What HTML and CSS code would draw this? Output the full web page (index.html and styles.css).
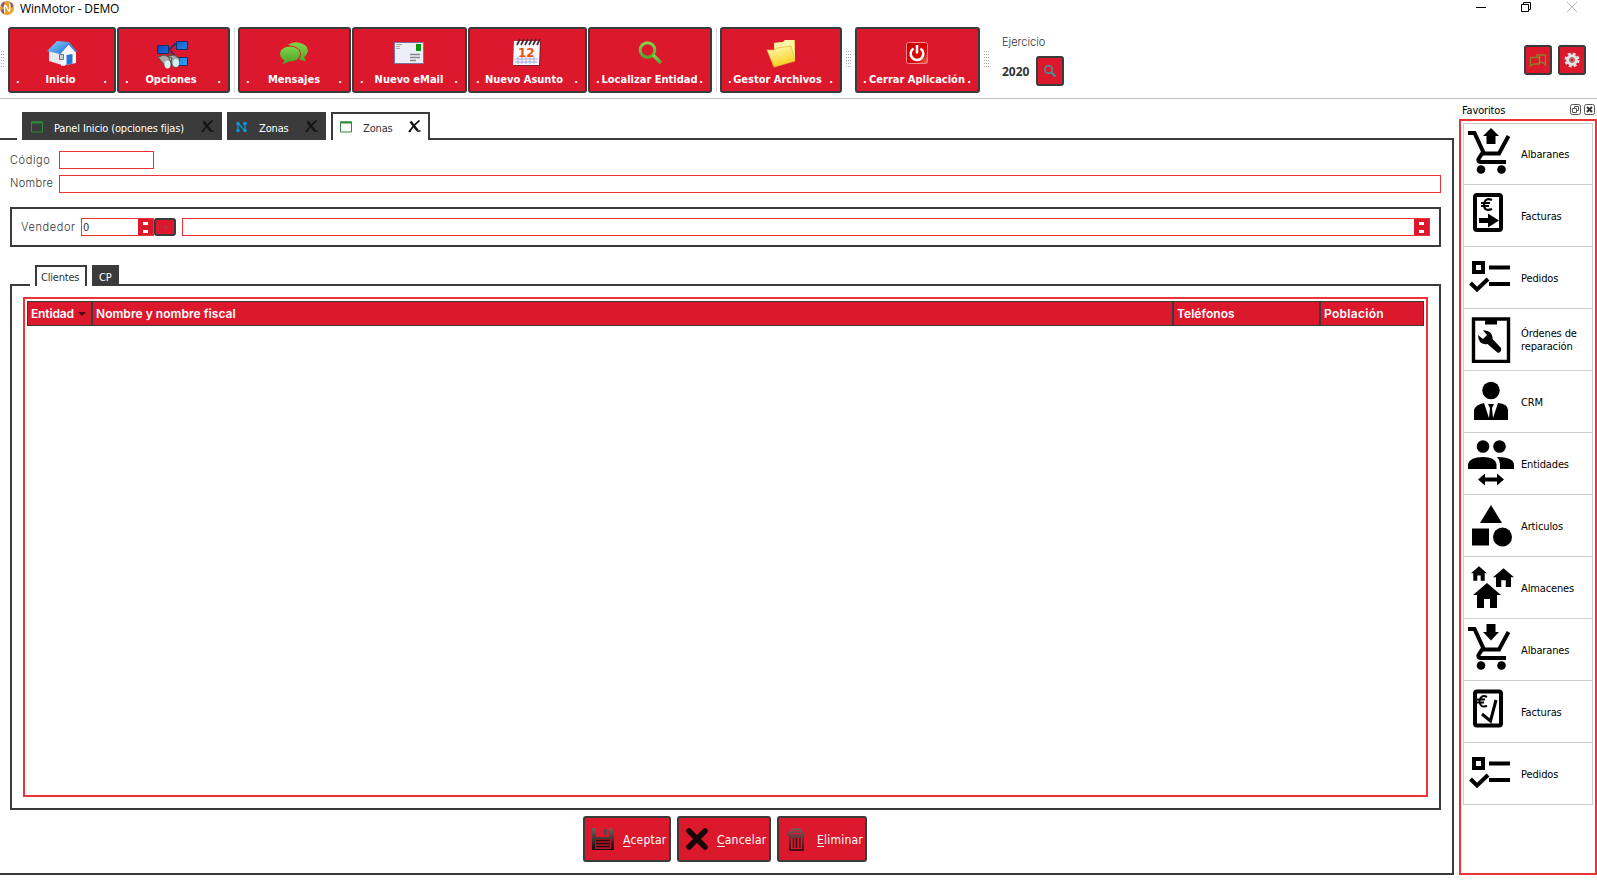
FILE: index.html
```html
<!DOCTYPE html>
<html lang="es">
<head>
<meta charset="utf-8">
<title>WinMotor - DEMO</title>
<link rel="stylesheet" href="styles.css">
</head>
<body>
<svg class="defs" width="0" height="0">
  <defs>
    <linearGradient id="green" x1="0" y1="0" x2="0" y2="1"><stop offset="0" stop-color="#83d44a"/><stop offset="1" stop-color="#50a829"/></linearGradient>
    <linearGradient id="blue" x1="0" y1="0" x2="1" y2="1"><stop offset="0" stop-color="#0a3fb5"/><stop offset="1" stop-color="#2ba4ff"/></linearGradient>
    <linearGradient id="roof" x1="0" y1="0" x2="1" y2="1"><stop offset="0" stop-color="#8fd0ff"/><stop offset="1" stop-color="#1d74d8"/></linearGradient>
    <linearGradient id="folder" x1="0" y1="0" x2="0.4" y2="1"><stop offset="0" stop-color="#fffbc4"/><stop offset="1" stop-color="#fbd21c"/></linearGradient>
    <linearGradient id="dark" x1="0" y1="0" x2="0" y2="1"><stop offset="0" stop-color="#656565"/><stop offset="1" stop-color="#150809"/></linearGradient>
    <linearGradient id="power" x1="0" y1="0" x2="1" y2="1"><stop offset="0" stop-color="#c80000"/><stop offset=".7" stop-color="#dd0808"/><stop offset="1" stop-color="#e8805a"/></linearGradient>
    <symbol id="window" viewBox="0 0 12 12"><path d="M.5 1h11v10H.5z" fill="none" stroke="#2f8b35"/><path d="M0 .5h12v2H0z" fill="#2f8b35"/></symbol>
    <symbol id="cross" viewBox="0 0 13 13"><path d="M2.500 1.500l7 9" stroke="currentColor" stroke-width="2.600"/><path d="M11.500 .5C8 3 4 7 1 12" stroke="currentColor" stroke-width="1.700" fill="none"/><path d="M9 11h3.500M1 11h2" stroke="currentColor" stroke-width="1.500"/></symbol>
    <symbol id="cart" viewBox="0 0 46 46"><path d="M0 5h6.500L16 25.500h15L40.500 8" fill="none" stroke="#000" stroke-width="4"/><path d="M15 24l-4.500 7q-1 3 2 3H38" fill="none" stroke="#000" stroke-width="4"/><circle cx="13" cy="41.500" r="4.300"/><circle cx="33.500" cy="41.500" r="4.300"/></symbol>
    <symbol id="orders" viewBox="0 0 46 46"><path d="M6 10h9v9H6zM21 14.500h21M21 31h21" fill="none" stroke="#000" stroke-width="4"/><path d="M2.500 30l6.500 6.500L20 26" fill="none" stroke="#000" stroke-width="4"/></symbol>
    <symbol id="house" viewBox="0 0 28 25"><path d="M14 0l14 12h-4v13h-7v-9h-6v9H4V12H0z"/></symbol>
  </defs>
</svg>

<header class="titlebar">
  <svg class="app-icon" width="14" height="14" viewBox="0 0 14 14"><circle cx="7" cy="7" r="7" fill="#eca029"/><path d="M1 3.500Q2.500 1 4.500.5L4 5 2 6.500zM1 9l3-1.500V13Q1.500 12 1 9M10 .7q3 1.300 3.500 4.300L11 7z" fill="#7b5690"/><path d="M4.500 11.500V5q.5-1.300 1.300-.3l2.700 5q.8 1 1.300-.4V2.500" fill="none" stroke="#fff" stroke-width="1.300"/></svg>
  <span class="app-title">WinMotor - DEMO</span>
  <svg class="window-buttons" width="102" height="14" viewBox="0 0 102 14" fill="none" stroke="#000"><path d="M0 6.500h10M45.500 3.500h7v7h-7zM47.500 3V1.500h7v7H53"/><path d="M91 1l10 10M101 1L91 11" stroke="#bbb"/></svg>
</header>

<nav class="toolbar">
  <i class="grip grip-first"></i>
  <button class="tool w-inicio"><svg width="32" height="32" viewBox="0 0 32 32"><path d="M3 14l8-5 4 4 4 2v14L3 24z" fill="#e9e9ee"/><path d="M15 16l8-9 7 8v11l-15 3z" fill="#f8f8fa"/><path d="M1 14L11 4l12 1-9 12z" fill="url(#roof)"/><path d="M23 5l8 9.500-1.500 1L22.500 7.500 14.500 17l-1-1.500z" fill="#3e8de6"/><path d="M20.500 18l6-1v9.500l-6 1.500z" fill="#2777d5"/><path d="M13.500 17.500h4v5h-4z" fill="#ccc" stroke="#777"/></svg><span class="label"><i>.</i><b>Inicio</b><i>.</i></span></button>
  <button class="tool w-opciones"><svg width="32" height="32" viewBox="0 0 32 32"><path d="M12 13l6-6h3M14 14l5 7h4" stroke="#38256d" stroke-width="2" fill="none"/><path d="M.5 8.500h11v8H.5zM19.500 4.500h11v8h-11zM19.500 20.500h11v8h-11z" fill="url(#blue)" stroke="#163067"/><path d="M1 20l6-2 8 3-2 8-4 1zM11 19l6-1 6 4-3 8h-4z" fill="#a8aaa4" stroke="#53544f"/><ellipse cx="10.500" cy="27.500" rx="3" ry="4" fill="#d4f2f8"/><ellipse cx="19" cy="26" rx="3" ry="4" fill="#d4f2f8"/></svg><span class="label"><i>.</i><b>Opciones</b><i>.</i></span></button>
  <i class="rule"></i>
  <button class="tool w-mensajes"><svg width="32" height="32" viewBox="0 0 32 32"><path d="M10 8q5-4 12-2 8 2 8 8-1 4-4 6l2 4q-4 0-7-2 5-9-11-14z" fill="url(#green)"/><ellipse cx="12" cy="17" rx="10.500" ry="8" fill="url(#green)" stroke="#dc182c"/><path d="M6 22q1 3-2 5 4 0 7-3z" fill="#55ad2d"/></svg><span class="label"><i>.</i><b>Mensajes</b><i>.</i></span></button>
  <button class="tool w-email"><svg width="32" height="32" viewBox="0 0 32 32"><path d="M1.500 5.500h29v21h-29z" fill="#eeeef8" stroke="#7774a0"/><path d="M3 7.500h6M3 9.500h4M3 11.500h4" stroke="#aaa"/><path d="M23 7h5v7h-5z" fill="#06980b"/><path d="M17 17.500h10M17 20.500h10M17 23.500h6" stroke="#888" stroke-width="1.500"/></svg><span class="label"><i>.</i><b>Nuevo eMail</b><i>.</i></span></button>
  <button class="tool w-asunto"><svg width="32" height="32" viewBox="0 0 32 32"><path d="M4 5h26l-1 24H3z" fill="#77222c"/><path d="M3 4h26l-1 24H2z" fill="#fbfbff"/><path d="M4 22h23M4 25h23M7 20v7M11 20v7M15 20v7M19 20v7M23 20v7" stroke="#aaa9dc"/><path d="M6 8l3-6M10 8l3-6M14 8l3-6M18 8l3-6M22 8l3-6M26 8l3-6" stroke="#422d31" stroke-width="1.700"/><text x="7" y="19.500" class="calendar-number">12</text></svg><span class="label"><i>.</i><b>Nuevo Asunto</b><i>.</i></span></button>
  <button class="tool w-localizar"><svg width="32" height="32" viewBox="0 0 32 32" fill="none" stroke="url(#green)"><circle cx="13.500" cy="13" r="7.300" stroke-width="3"/><path d="M19 18l8 8" stroke-width="3.500"/></svg><span class="label"><i>.</i><b>Localizar Entidad</b><i>.</i></span></button>
  <i class="rule"></i>
  <button class="tool w-gestor"><svg width="32" height="32" viewBox="0 0 32 32"><path d="M9 6l9-1 2-2h10v21L9 30z" fill="#e5bc35"/><path d="M9 6l9-1 2-2h9l1 20-19 6z" fill="#fff5a9"/><path d="M2 13h8l2-2 14-2 4 15-21 6z" fill="url(#folder)" stroke="#e3bb32" stroke-width=".7"/></svg><span class="label"><i>.</i><b>Gestor Archivos</b><i>.</i></span></button>
  <i class="grip"></i>
  <button class="tool w-cerrar"><svg width="32" height="32" viewBox="0 0 32 32"><rect x="5.500" y="5.500" width="21" height="21" rx="2" fill="url(#power)" stroke="#ed8d91"/><path d="M12.500 11.500a6.300 6.300 0 1 0 7 0M16 8v8.500" fill="none" stroke="#fff" stroke-width="2.500"/></svg><span class="label"><i>.</i><b>Cerrar Aplicación</b><i>.</i></span></button>
  <i class="grip"></i>
  <div class="exercise"><span class="gothic exercise-label">Ejercicio</span><div class="exercise-row"><b>2020</b><button class="square"><svg width="14" height="14" viewBox="0 0 14 14" fill="none" stroke="#389a9b"><circle cx="5.500" cy="5.500" r="3.700" stroke-width="1.600"/><path d="M8 8l4.500 4.500" stroke-width="2"/></svg></button></div></div>
  <div class="corner-buttons">
    <button class="square"><svg width="18" height="16" viewBox="0 0 18 16" fill="none" stroke="#87812c" stroke-width="1.300"><path d="M8 5V3h8.500v10l-3-2.500h-2"/><path d="M1.500 5.500h9v6.500h-6l-3 2z"/><path d="M10.500 4v7" stroke="#69a91e"/></svg></button>
    <button class="square"><svg width="16" height="16" viewBox="0 0 16 16"><circle cx="8" cy="8" r="6.300" fill="none" stroke="#ddd" stroke-width="2.500" stroke-dasharray="2.900 2.050"/><circle cx="8" cy="8" r="4.300" fill="none" stroke="#e5e5e5" stroke-width="3"/><circle cx="8" cy="8" r="2" fill="#dc182c" stroke="#999"/></svg></button>
  </div>
</nav>

<div class="body">
  <main class="workspace">
    <div class="tabs">
      <div class="tab tab-panel"><svg width="12" height="12"><use href="#window"/></svg><span>Panel Inicio (opciones fijas)</span><svg class="close" width="13" height="13"><use href="#cross"/></svg></div>
      <div class="tab"><svg width="11" height="12" viewBox="0 0 11 12"><path d="M2 10V2l7 8V2" fill="none" stroke="#079be0" stroke-width="1.200"/><path d="M.5 1h3v3h-3zM7.500 1h3v3h-3zM.5 8h3v3h-3zM7.500 8h3v3h-3z" fill="#079be0"/></svg><span class="after-nodes">Zonas</span><svg class="close" width="13" height="13"><use href="#cross"/></svg></div>
      <div class="tab active"><svg width="12" height="12"><use href="#window"/></svg><span>Zonas</span><svg class="close" width="13" height="13"><use href="#cross"/></svg></div>
      <i class="tab-line"></i>
    </div>
    <div class="form">
      <label class="field"><span class="gothic codigo">Código</span><i class="input short"></i></label>
      <label class="field"><span class="gothic nombre">Nombre</span><i class="input"></i></label>
      <section class="vendor">
        <span class="gothic vendedor">Vendedor</span>
        <div class="input number"><span>0</span><i class="spin"></i></div>
        <button class="mini"><i></i></button>
        <div class="input vendor-name"><i class="spin"></i></div>
      </section>
      <div class="subtabs"><div class="subtab active">Clientes</div><div class="subtab cp">CP</div><i class="tab-line"></i></div>
      <section class="clients">
        <div class="grid">
          <div class="grid-head"><div><span class="h-entidad">Entidad</span><i class="sort"></i></div><div><span class="h-nombre">Nombre y nombre fiscal</span></div><div><span class="h-tel">Teléfonos</span></div><div><span class="h-pob">Población</span></div></div>
        </div>
      </section>
      <footer class="actions">
        <button class="action a-aceptar"><svg width="24" height="24" viewBox="0 0 24 24"><path d="M1 1h4v9h13V1h2l3 3v19H1z" fill="url(#dark)"/><path d="M13 2h3v6h-3z" fill="#5d4547"/><path d="M4 12h16v10H4z" fill="#ac1725"/><path d="M5 13.500h14M5 16.500h14M5 19.500h14" stroke="#29090d" stroke-width="1.500"/></svg><span><u>A</u>ceptar</span></button>
        <button class="action a-cancelar"><svg width="24" height="24" viewBox="0 0 24 24"><path d="M4 4l16 16M20 4L4 20" stroke="#170507" stroke-width="5.500" stroke-linecap="round"/></svg><span><u>C</u>ancelar</span></button>
        <button class="action a-eliminar"><svg width="24" height="24" viewBox="0 0 24 24" fill="none" stroke="url(#dark)"><path d="M6 5q0-3 3-3h4q3 0 3 3M3 8q0-3 3-3h10q3 0 3 3zM5 10h13v13H5z" stroke-width="1.500"/><path d="M8.500 11v10M11.500 11v10.100M14.800 11v10.100" stroke="#390e13" stroke-width="1.500"/></svg><span><u>E</u>liminar</span></button>
      </footer>
    </div>
  </main>

  <aside class="dock">
    <div class="dock-title"><span>Favoritos</span><svg width="26" height="12" viewBox="0 0 26 12" fill="none" stroke="#555"><rect x=".5" y=".5" width="10" height="10" rx="2"/><path d="M2.500 4.500h4v4h-4zM4.500 4V2.500h4v4H7"/><rect x="14.500" y=".5" width="10" height="10" rx="2"/><path d="M17 3l5 5M22 3l-5 5" stroke="#333" stroke-width="2"/></svg></div>
    <div class="favorites">
      <div class="favorite"><svg class="raise-3" viewBox="0 0 46 46"><use href="#cart"/><path d="M23 0l8 8h-3.500v8h-9V8H15z"/></svg><span>Albaranes</span></div>
      <div class="favorite"><svg class="raise-2" viewBox="0 0 46 46"><rect x="7" y="4" width="26" height="35" rx="2" fill="none" stroke="#000" stroke-width="4"/><path d="M24 9q-7-3-8 4.500 0 7.500 8 4.500M13 12h9M13 15h8" fill="none" stroke="#000" stroke-width="2.200"/><path d="M11 27h9v-4.500l11 7-11 7V32h-9z"/></svg><span>Facturas</span></div>
      <div class="favorite"><svg class="raise-2" viewBox="0 0 46 46"><use href="#orders"/></svg><span>Pedidos</span></div>
      <div class="favorite"><svg viewBox="0 0 46 46"><path d="M5.500 2h35v42.500h-35z" fill="none" stroke="#000" stroke-width="3.400"/><path d="M17 1h12v6.500H17z"/><path d="M10 18l5 4 4-4-4-4.500q8-1 9.500 6.500-.5 2 1 3l7.500 8q1 4-3 5L19.500 27q-9 1.500-9.500-9z"/></svg><span>Órdenes de reparación</span></div>
      <div class="favorite"><svg viewBox="0 0 46 46"><circle cx="23" cy="11.500" r="8.700"/><path d="M6 41V31q1-5 10-7l5 15 1-10-2-4h6l-2 4 1 10 5-15q10 1 10 7v10z"/></svg><span>CRM</span></div>
      <div class="favorite"><svg class="raise-1" viewBox="0 0 46 46"><circle cx="15" cy="6.500" r="6.300"/><circle cx="31.500" cy="6.500" r="6.300"/><path d="M0 29v-5q2-7 15-7 12 0 13.500 7v5zM29 17q17 0 17 8v4H32v-5q0-4-3-7z"/><path d="M10 39.500l7-6v4h12v-4l7 6-7 6v-4H17v4z"/></svg><span>Entidades</span></div>
      <div class="favorite"><svg viewBox="0 0 46 46"><path d="M23 2l11 18H12zM4 25.500h17v17H4z"/><circle cx="34.500" cy="34" r="9.500"/></svg><span>Articulos</span></div>
      <div class="favorite"><svg viewBox="0 0 46 46"><use href="#house" x="5" y="18" width="28" height="25"/><use href="#house" x="3" y="1" width="16" height="15"/><use href="#house" x="25" y="3" width="21" height="19"/></svg><span>Almacenes</span></div>
      <div class="favorite"><svg class="raise-3" viewBox="0 0 46 46"><use href="#cart"/><path d="M18.500 0h9v8H31l-8 8.500L15 8h3.500z"/></svg><span>Albaranes</span></div>
      <div class="favorite"><svg class="raise-2" viewBox="0 0 46 46"><rect x="7" y="4.500" width="26" height="34" rx="2" fill="none" stroke="#000" stroke-width="4"/><path d="M19 10q-6-3-7.500 4 0 7 7.500 5M9 12.500h8M9 15.500h7" fill="none" stroke="#000" stroke-width="2"/><path d="M14 27l8.500 7L28 13" fill="none" stroke="#000" stroke-width="3"/></svg><span>Facturas</span></div>
      <div class="favorite"><svg class="raise-2" viewBox="0 0 46 46"><use href="#orders"/></svg><span>Pedidos</span></div>
    </div>
  </aside>
</div>
</body>
</html>
```
FILE: styles.css
```css
* { box-sizing: border-box; }
body { margin: 0; width: 1597px; height: 891px; overflow: hidden; background: #fff; color: #000; font: 11px/13px "DejaVu Sans Condensed", "DejaVu Sans", sans-serif; letter-spacing: -.15px; }
svg { display: block; flex: none; }
i { font-style: normal; }
button { margin: 0; padding: 0; flex: none; background: #dc182c; border: 2px solid #3b3b3b; border-radius: 3px; color: #fff; font: inherit; }
.defs { position: absolute; }

.titlebar { display: flex; height: 27px; align-items: flex-start; padding: 1px 19px 0 0; }
.app-title { margin: 1px 0 0 6px; font: 12px/14px "Open Sans", sans-serif; letter-spacing: -.15px; }
.window-buttons { margin: 0 0 0 auto; }

.toolbar { display: flex; height: 72px; align-items: flex-start; border-bottom: 1px solid #bfbfbf; }
.tool { display: flex; flex-direction: column; align-items: center; height: 66px; padding-top: 8px; margin-right: 1px; }
.label { display: flex; justify-content: space-between; width: 100%; padding: 0 7px 0 6px; height: 16px; margin-top: 3px; }
.label b, .label i { font: bold 11px/16px "DejaVu Sans Condensed", sans-serif; white-space: nowrap; letter-spacing: 0; }
.w-inicio { width: 108px; }
.w-opciones { width: 113px; }
.w-mensajes { width: 113px; }
.w-email { width: 115px; }
.w-asunto { width: 119px; }
.w-localizar { width: 124px; }
.w-gestor { width: 122px; }
.w-cerrar { width: 125px; }
.w-opciones b { padding-right: 4px; }
.w-asunto b, .w-gestor b { padding-right: 6px; }
.w-inicio b { padding-right: 2px; }
.tool > svg { margin-left: -1px; }
.rule { width: 1px; height: 64px; margin: 1px 3px 0; background: #ddd; }
.grip { width: 5px; height: 17px; margin: 24px 4px 0 3px; background: radial-gradient(circle at .5px .5px, #aaa .7px, transparent .8px) 0 0 / 2px 3px; }
.grip-first { margin: 24px 4px 0 -1px; }
.calendar-number { font: bold 12px "DejaVu Sans", sans-serif; fill: #f0500a; }
.exercise { margin: 8px 0 0 9px; }
.exercise-row { display: flex; align-items: center; gap: 6px; margin-top: 7px; color: #333; }
.exercise-row b { width: 28px; padding-top: 1px; font: bold 12px/16px "Noto Sans", sans-serif; letter-spacing: 0; }
.square { display: flex; align-items: center; justify-content: center; width: 28px; height: 30px; }
.corner-buttons { display: flex; gap: 6px; margin: 18px 11px 0 auto; }

.gothic { font: 300 11px/17px "Inter", sans-serif; letter-spacing: .5px; white-space: nowrap; color: #333; }
.gothic.exercise-label { display: block; line-height: 14px; letter-spacing: 0; }

.body { display: flex; justify-content: space-between; height: 776px; }
.workspace { width: 1454px; padding-top: 13px; }
.tabs { display: flex; height: 28px; align-items: stretch; padding-left: 22px; gap: 5px; background: linear-gradient(#3b3b3b, #3b3b3b) 0 26px / 17px 2px no-repeat; }
.tab { display: flex; align-items: center; width: 99px; padding: 1px 8px 0 9px; background: #3b3b3b; color: #fff; }
.tab-panel { width: 200px; }
.tab span { margin-left: 11px; white-space: nowrap; padding-top: 4px; }
.tab .after-nodes { margin-left: 12px; }
.tab .close { margin-left: auto; color: #151515; }
.tab.active, .subtab.active { background: #fff; border: 2px solid #3b3b3b; border-bottom: 0; color: #333; }
.tab.active { padding: 0 7px 1px 7px; }
.tab-line { flex: 1; align-self: flex-end; height: 2px; background: #3b3b3b; margin-left: -5px; }
.form { height: 735px; padding: 11px 11px 0 10px; border: solid #3b3b3b; border-width: 0 2px 2px 0; }
.field { display: flex; height: 18px; margin-bottom: 6px; }
.field .gothic { width: 49px; }
.codigo { padding-top: 1px; letter-spacing: .6px; }
.field .nombre { letter-spacing: .35px; }
.input { display: flex; flex: 1; height: 18px; border: 1px solid #ed3237; }
.input.short { flex: 0 0 95px; }
.vendor { display: flex; height: 40px; margin-top: 14px; border: 2px solid #3b3b3b; padding: 9px 9px 0; }
.vendedor { width: 60px; padding-top: 1px; letter-spacing: .6px; }
.input.number { flex: 0 0 73px; color: #333; }
.number span { padding: 2px 1px; }
.spin { width: 15px; margin-left: auto; background: linear-gradient(#fff, #fff) 5px 3px / 5px 3px no-repeat, linear-gradient(#fff, #fff) 5px 11px / 5px 3px no-repeat, #dc182c; }
.mini { display: grid; place-items: center; width: 22px; height: 18px; margin-right: 6px; }
.mini i { width: 3px; height: 2px; background: #a63b4c; }
.subtabs { display: flex; height: 21px; margin-top: 18px; padding-left: 25px; gap: 5px; background: linear-gradient(#3b3b3b, #3b3b3b) 0 19px / 20px 2px no-repeat; }
.subtab { width: 52px; padding: 4px 0 0 4px; letter-spacing: -.2px; }
.subtab.cp { width: 27px; padding: 6px 0 0 7px; background: #3b3b3b; color: #fff; }
.clients { height: 524px; padding: 11px; border: 2px solid #3b3b3b; border-top: 0; }
.grid { height: 500px; border: 2px solid #ed3237; padding: 2px; }
.grid-head { display: grid; grid-template-columns: 65px 1081px 147px 1fr; height: 25px; border: 1px solid #3b3b3b; background: #dc182c; color: #fff; }
.grid-head div { display: flex; align-items: center; padding-left: 3px; border-right: 2px solid #3b3b3b; font: 600 12px/14px "Inter", sans-serif; letter-spacing: .05px; white-space: nowrap; }
.grid-head div:last-child { border: 0; letter-spacing: .3px; }
.h-entidad { letter-spacing: -.15px; }
.sort { margin-left: 4px; border: 4px solid transparent; border-top-color: #4c0b12; border-bottom: 0; }
.actions { display: flex; justify-content: flex-start; gap: 6px; padding: 6px 0 0 573px; }
.action { display: flex; align-items: center; height: 46px; padding-left: 6px; font: 12px/14px "DejaVu Sans Condensed", sans-serif; letter-spacing: .22px; }
.action span { margin-left: 8px; padding-top: 2px; white-space: nowrap; }
.action u { text-underline-offset: 2px; }
.a-aceptar { width: 88px; }
.a-cancelar { width: 94px; }
.a-eliminar { width: 90px; }

.dock { width: 138px; }
.dock-title { display: flex; justify-content: space-between; height: 20px; padding: 5px 1px 0 3px; }
.favorites { height: 756px; border: 2px solid #ed3237; padding: 2px; }
.favorite { display: flex; align-items: center; height: 62px; border: 1px solid #cfcfcf; border-top: 0; padding-left: 4px; }
.favorite:first-child { border-top: 1px solid #cfcfcf; }
.favorite svg { width: 46px; height: 46px; }
.favorite .raise-1 { margin-bottom: 2px; }
.favorite .raise-2 { margin-bottom: 4px; }
.favorite .raise-3 { margin-bottom: 6px; }
.favorite span { width: 70px; margin-left: 7px; padding-top: 1px; letter-spacing: -.13px; }
```
